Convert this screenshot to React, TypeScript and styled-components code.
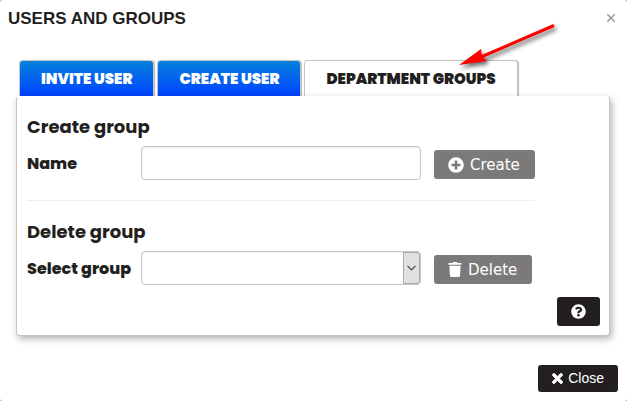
import React, { useState } from 'react';
import styled, { createGlobalStyle, css } from 'styled-components';
import { FaPlusCircle, FaQuestionCircle, FaTimes, FaTrash } from 'react-icons/fa';

const ink = '#231f20';
const line = '#c6c6c6';
const heading = '"Poppins", "Inter", sans-serif';

const GlobalStyle = createGlobalStyle`
  * { box-sizing: border-box; }
  body { margin: 0; background: #b4b4b4; }
  button, input, select { font: inherit; margin: 0; }
`;

const Dialog = styled.section`
  min-height: 100vh;
  padding: 8px 9px 9px 8px;
  display: flex;
  flex-direction: column;
  background: #fff;
  border-radius: 3px;
  color: ${ink};
  font-family: "Liberation Sans", Arial, sans-serif;
`;

const DialogHeader = styled.header`
  display: flex;
  align-items: center;
  justify-content: space-between;
  height: 20px;
  margin-bottom: 32px;
`;

const DialogTitle = styled.h1`
  margin: 2px 0 0;
  font-size: 17px;
  line-height: 20px;
  font-weight: 700;
`;

const DismissButton = styled.button`
  display: flex;
  padding: 3px;
  border: 0;
  background: none;
  color: #9b9393;
  cursor: pointer;
`;

const TabList = styled.div`
  display: flex;
  gap: 3px;
  margin: 0 11px;
  position: relative;
`;

const Tab = styled.button<{ $active: boolean }>`
  height: 36px;
  padding: 0 21px;
  border: 1px solid ${line};
  border-bottom: 0;
  border-radius: 4px 4px 0 0;
  background: linear-gradient(#0582dc, #0042ff);
  box-shadow: 1px 0 1px #bbb;
  color: #fff;
  font-family: ${heading};
  font-size: 15px;
  line-height: 20px;
  font-weight: 900;
  white-space: nowrap;
  cursor: pointer;
  ${({ $active }) => $active && css`
    background: #fff;
    color: ${ink};
  `}
`;

const Panel = styled.div`
  position: relative;
  margin: 0 8px;
  padding: 19px 9px 9px 10px;
  border: 1px solid ${line};
  border-top-color: #fff;
  border-radius: 4px;
  background: #fff;
  box-shadow: 2px 3px 7px rgba(0, 0, 0, 0.3);
`;

const Forms = styled.div`
  width: fit-content;
`;

const GroupForm = styled.form`
  display: flex;
  flex-direction: column;
  gap: 8px;
`;

const GroupTitle = styled.h2`
  margin: 0;
  font-family: ${heading};
  font-size: 18px;
  line-height: 22px;
  font-weight: 700;
`;

const Field = styled.div`
  display: grid;
  grid-template-columns: 114px 280px auto;
  align-items: center;
  justify-content: start;
`;

const Label = styled.label`
  margin-top: 2px;
  font-family: ${heading};
  font-size: 16px;
  line-height: 20px;
  font-weight: 800;
`;

const control = css`
  width: 100%;
  height: 34px;
  padding: 6px 12px;
  border: 1px solid ${line};
  border-radius: 4px;
  background: #fff;
  box-shadow: inset 0 1px 1px rgba(0, 0, 0, 0.08);
  color: ${ink};
  font-size: 14px;
`;

const TextInput = styled.input`
  ${control}
`;

const SelectBox = styled.div`
  position: relative;
`;

const Select = styled.select`
  ${control}
  display: block;
  appearance: none;
  padding-right: 28px;
`;

const SelectArrow = styled.span`
  position: absolute;
  top: 1px;
  right: 1px;
  bottom: 1px;
  width: 17px;
  display: flex;
  align-items: center;
  justify-content: center;
  border: 1px solid #a9a9a9;
  border-radius: 0 3px 3px 0;
  background: #e1e1e1;
  pointer-events: none;
`;

const Separator = styled.hr`
  margin: 20px 0;
  border: 0;
  border-top: 1px solid #eee;
`;

const ActionButton = styled.button`
  justify-self: start;
  display: flex;
  align-items: center;
  gap: 6px;
  height: 29px;
  margin: 3px 0 0 13px;
  padding: 0 15px 0 14px;
  border: 0;
  border-radius: 3px;
  background: #7b7979;
  color: #fff;
  font-family: "DejaVu Sans", Verdana, sans-serif;
  font-size: 15px;
  line-height: 20px;
  cursor: pointer;
`;

const TrashIcon = styled(FaTrash)`
  width: 14px;
  height: 15px;
`;

const PanelFooter = styled.div`
  display: flex;
  justify-content: flex-end;
  margin-top: 12px;
`;

const DarkButton = styled.button`
  display: flex;
  align-items: center;
  gap: 5px;
  padding: 4px 14px;
  border: 0;
  border-radius: 3px;
  background: ${ink};
  color: #fff;
  font-size: 14px;
  line-height: 19px;
  cursor: pointer;
`;

const HelpButton = styled(DarkButton)`
  padding: 7px 14px;
`;

const CloseIcon = styled(FaTimes)`
  width: 11px;
  height: 15px;
  overflow: visible;
  stroke-width: 28px;
`;

const DialogFooter = styled.footer`
  display: flex;
  justify-content: flex-end;
  margin-top: auto;
`;

const Pointer = styled.svg`
  position: absolute;
  left: 438px;
  top: -40px;
  pointer-events: none;
  filter: drop-shadow(2px 3px 2px rgba(0, 0, 0, 0.6));
  overflow: visible;
`;

const tabs = ['INVITE USER', 'CREATE USER', 'DEPARTMENT GROUPS'];

export default function App() {
  const [active, setActive] = useState(tabs[2]);
  const stay = (event: React.FormEvent) => event.preventDefault();

  return (
    <>
      <GlobalStyle />
      <Dialog role="dialog" aria-labelledby="dialog-title">
        <DialogHeader>
          <DialogTitle id="dialog-title">USERS AND GROUPS</DialogTitle>
          <DismissButton type="button" aria-label="Dismiss">
            <svg width="8" height="8" viewBox="0 0 8 8" stroke="currentColor" strokeWidth="1.4">
              <path d="M0.3 0.3 7.7 7.7M7.7 0.3 0.3 7.7" />
            </svg>
          </DismissButton>
        </DialogHeader>

        <TabList role="tablist">
          {tabs.map((name) => (
            <Tab
              key={name}
              type="button"
              role="tab"
              aria-selected={name === active}
              $active={name === active}
              onClick={() => setActive(name)}
            >
              {name}
            </Tab>
          ))}
          <Pointer width="102" height="48" viewBox="0 0 102 48" aria-hidden="true">
            <path d="M97 5.5 24 37" stroke="#f00" strokeWidth="3" />
            <path d="M2 45 24 29 25 36 30 41Z" fill="#f00" />
          </Pointer>
        </TabList>

        <Panel role="tabpanel" aria-label={active}>
          <Forms>
            <GroupForm onSubmit={stay}>
              <GroupTitle>Create group</GroupTitle>
              <Field>
                <Label htmlFor="group-name">Name</Label>
                <TextInput id="group-name" type="text" />
                <ActionButton type="submit">
                  <FaPlusCircle size={16} />
                  Create
                </ActionButton>
              </Field>
            </GroupForm>
            <Separator />
            <GroupForm onSubmit={stay}>
              <GroupTitle>Delete group</GroupTitle>
              <Field>
                <Label htmlFor="group-select">Select group</Label>
                <SelectBox>
                  <Select id="group-select" />
                  <SelectArrow>
                    <svg width="9" height="6" viewBox="0 0 9 6" fill="none" stroke="#444" strokeWidth="1.2">
                      <path d="M0.5 0.8 4.5 4.8 8.5 0.8" />
                    </svg>
                  </SelectArrow>
                </SelectBox>
                <ActionButton type="submit">
                  <TrashIcon />
                  Delete
                </ActionButton>
              </Field>
            </GroupForm>
          </Forms>
          <PanelFooter>
            <HelpButton type="button" aria-label="Help">
              <FaQuestionCircle size={15} />
            </HelpButton>
          </PanelFooter>
        </Panel>

        <DialogFooter>
          <DarkButton type="button">
            <CloseIcon stroke="currentColor" />
            Close
          </DarkButton>
        </DialogFooter>
      </Dialog>
    </>
  );
}
